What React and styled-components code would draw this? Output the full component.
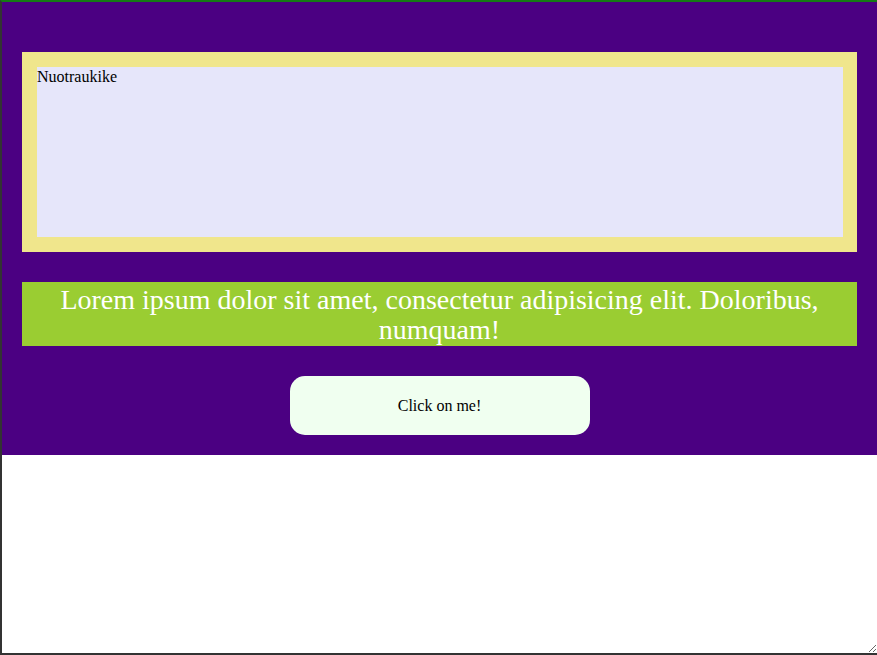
import React from 'react';
import styled, { createGlobalStyle } from 'styled-components';

const GlobalStyle = createGlobalStyle`
  html, body {
    margin: 0;
    padding: 0;
    background: #fff;
  }
  body {
    font-family: "Liberation Serif", "Times New Roman", serif;
  }
`;

export default function App() {
  return (
    <>
      <GlobalStyle />
      <Frame>
        <Hero>
          <PhotoBox>
            <PhotoInner>Nuotraukike</PhotoInner>
          </PhotoBox>
          <Banner>
            Lorem ipsum dolor sit amet, consectetur adipisicing elit. Doloribus, numquam!
          </Banner>
          <ButtonRow>
            <ClickButton>Click on me!</ClickButton>
          </ButtonRow>
        </Hero>
      </Frame>
    </>
  );
}

// Styled components
const Frame = styled.div`
  box-sizing: border-box;
  width: 100%;
  height: 655px;
  border-top: 2px solid #157a15;
  border-left: 2px solid #333;
  border-bottom: 2px solid #333;
  overflow: auto;
  resize: both;
`;

const Hero = styled.section`
  background: #4b0082;
  padding: 50px 20px 20px;
  display: flex;
  flex-direction: column;
  gap: 30px;
`;

const PhotoBox = styled.div`
  background: #f0e68c;
  padding: 15px 14px 15px 15px;
`;

const PhotoInner = styled.div`
  box-sizing: border-box;
  background: #e6e6fa;
  height: 170px;
  padding-top: 1px;
  font-size: 16px;
  color: #000;
`;

const Banner = styled.p`
  margin: 0;
  padding-top: 3px;
  height: 64px;
  box-sizing: border-box;
  background: #9acd32;
  color: #fff;
  font-size: 28px;
  line-height: 30px;
  text-align: center;
`;

const ButtonRow = styled.div`
  display: flex;
  justify-content: center;
`;

const ClickButton = styled.button`
  width: 300px;
  height: 59px;
  border: none;
  border-radius: 15px;
  background: #f0fff0;
  font-family: "Liberation Serif", "Times New Roman", serif;
  font-size: 16px;
  color: #000;
  cursor: pointer;
`;
